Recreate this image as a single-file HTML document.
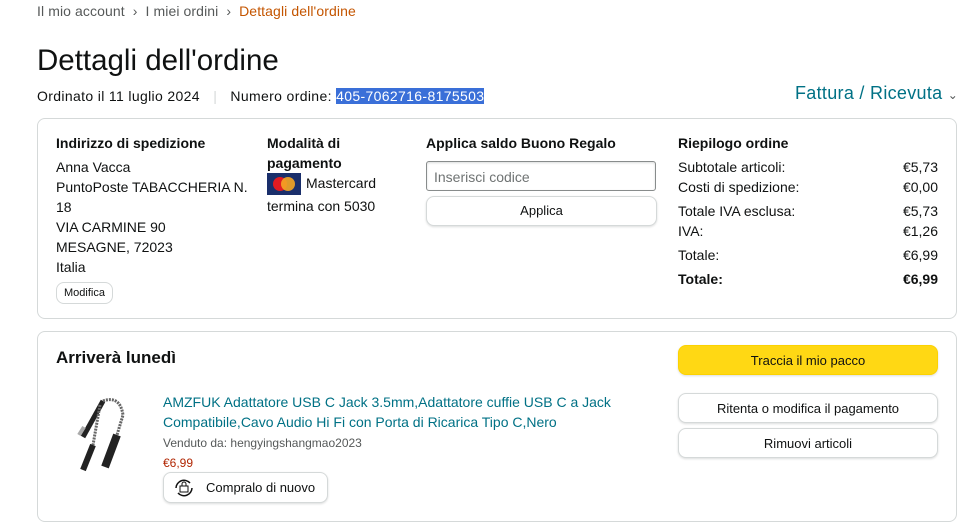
<!DOCTYPE html>
<html><head><meta charset="utf-8"><style>
*{box-sizing:border-box;margin:0;padding:0}
body{width:960px;height:523px;background:#fff;font-family:"Liberation Sans",Arial,sans-serif;color:#0f1111;font-size:14px;position:relative;overflow:hidden}
.a{position:absolute;white-space:nowrap}
.b{font-weight:bold}
.box{position:absolute;border:1px solid #d5d9d9;border-radius:8px}
.btn{position:absolute;border:1px solid #d5d9d9;border-radius:8px;background:#fff;text-align:center;font-size:13px;box-shadow:0 1px 2px rgba(15,17,17,.15)}
.l{line-height:20px}
.row{position:absolute;left:678px;width:260px;display:flex;justify-content:space-between}
</style></head><body>
<div class="a" style="left:37px;top:3px;color:#565959;font-size:14px;letter-spacing:.1px">Il mio account &nbsp;›&nbsp; I miei ordini &nbsp;›&nbsp; <span style="color:#c45500">Dettagli dell'ordine</span></div>
<div class="a" style="left:37px;top:44px;font-size:29.5px">Dettagli dell'ordine</div>
<div class="a" style="left:37px;top:88px;letter-spacing:.35px">Ordinato il 11 luglio 2024 <span style="color:#d5d9d9;margin:0 9px">|</span> Numero ordine: <span style="background:#3a6fd8;color:#fff">405-7062716-8175503</span></div>
<div class="a" style="left:795px;top:83px;font-size:18px;color:#007185;letter-spacing:.3px">Fattura / Ricevuta <span style="font-size:12px;color:#565959">⌄</span></div>
<div class="box" style="left:37px;top:118px;width:920px;height:201px"></div>
<div class="a b" style="left:56px;top:135px">Indirizzo di spedizione</div>
<div class="a l" style="left:56px;top:157px">Anna Vacca<br>PuntoPoste TABACCHERIA N.<br>18<br>VIA CARMINE 90<br>MESAGNE, 72023<br>Italia</div>
<div class="btn" style="left:56px;top:282px;width:57px;height:22px;font-size:11px;line-height:20px;box-shadow:none">Modifica</div>
<div class="a b l" style="left:267px;top:133px">Modalità di<br>pagamento</div>
<div class="a" style="left:267px;top:173px;width:34px;height:22px;background:#1a2f6b"><div style="position:absolute;left:6px;top:4px;width:14px;height:14px;border-radius:50%;background:#e21b22"></div><div style="position:absolute;left:14px;top:4px;width:14px;height:14px;border-radius:50%;background:#f5a623;opacity:.9"></div></div>
<div class="a" style="left:306px;top:175px">Mastercard</div>
<div class="a" style="left:267px;top:198px">termina con 5030</div>
<div class="a b" style="left:426px;top:135px">Applica saldo Buono Regalo</div>
<div class="a" style="left:426px;top:161px;width:230px;height:30px;border:1px solid #888c8c;border-radius:3px;padding:7px;color:#6f7373;box-shadow:inset 0 1px 2px rgba(15,17,17,.15)">Inserisci codice</div>
<div class="btn" style="left:426px;top:196px;width:231px;height:30px;line-height:28px">Applica</div>
<div class="a b" style="left:678px;top:135px">Riepilogo ordine</div>
<div class="row" style="top:159px"><span>Subtotale articoli:</span><span>€5,73</span></div>
<div class="row" style="top:179px"><span>Costi di spedizione:</span><span>€0,00</span></div>
<div class="row" style="top:203px"><span>Totale IVA esclusa:</span><span>€5,73</span></div>
<div class="row" style="top:223px"><span>IVA:</span><span>€1,26</span></div>
<div class="row" style="top:247px"><span>Totale:</span><span>€6,99</span></div>
<div class="row b" style="top:271px"><span>Totale:</span><span>€6,99</span></div>
<div class="box" style="left:37px;top:331px;width:920px;height:191px"></div>
<div class="a b" style="left:56px;top:348px;font-size:17px">Arriverà lunedì</div>
<svg class="a" style="left:75px;top:395px" width="60" height="80" viewBox="0 0 60 80"><path d="M8 42 L28 6" stroke="#222" stroke-width="5"/><path d="M28 6 Q45 0 48 20 L42 40" stroke="#666" stroke-width="3" fill="none" stroke-dasharray="2 1"/><path d="M25 10 L18 50" stroke="#666" stroke-width="3" stroke-dasharray="2 1"/><path d="M18 50 L8 75" stroke="#222" stroke-width="6"/><path d="M42 40 L30 72" stroke="#222" stroke-width="8"/><path d="M4 40 L9 32" stroke="#aaa" stroke-width="4"/></svg>
<div class="a l" style="left:163px;top:392px;color:#007185">AMZFUK Adattatore USB C Jack 3.5mm,Adattatore cuffie USB C a Jack<br>Compatibile,Cavo Audio Hi Fi con Porta di Ricarica Tipo C,Nero</div>
<div class="a" style="left:163px;top:436px;font-size:12px;color:#565959">Venduto da: hengyingshangmao2023</div>
<div class="a" style="left:163px;top:456px;font-size:12px;color:#b12704">€6,99</div>
<div class="btn" style="left:163px;top:472px;width:165px;height:31px;line-height:29px;font-size:13px;text-align:left;padding-left:42px">Compralo di nuovo</div>
<svg class="a" style="left:172px;top:477px" width="24" height="22" viewBox="0 0 24 22"><path d="M4 11a8 8 0 0 1 14-5M20 11a8 8 0 0 1-14 5" stroke="#111" stroke-width="1.5" fill="none"/><rect x="8" y="9" width="8" height="6" stroke="#111" fill="none"/><path d="M10 9V7a2 2 0 0 1 4 0v2" stroke="#111" fill="none"/></svg>
<div class="btn" style="left:678px;top:345px;width:260px;height:30px;line-height:29px;background:#ffd814;border-color:#fcd200">Traccia il mio pacco</div>
<div class="btn" style="left:678px;top:393px;width:260px;height:30px;line-height:29px">Ritenta o modifica il pagamento</div>
<div class="btn" style="left:678px;top:428px;width:260px;height:30px;line-height:29px">Rimuovi articoli</div>
</body></html>
